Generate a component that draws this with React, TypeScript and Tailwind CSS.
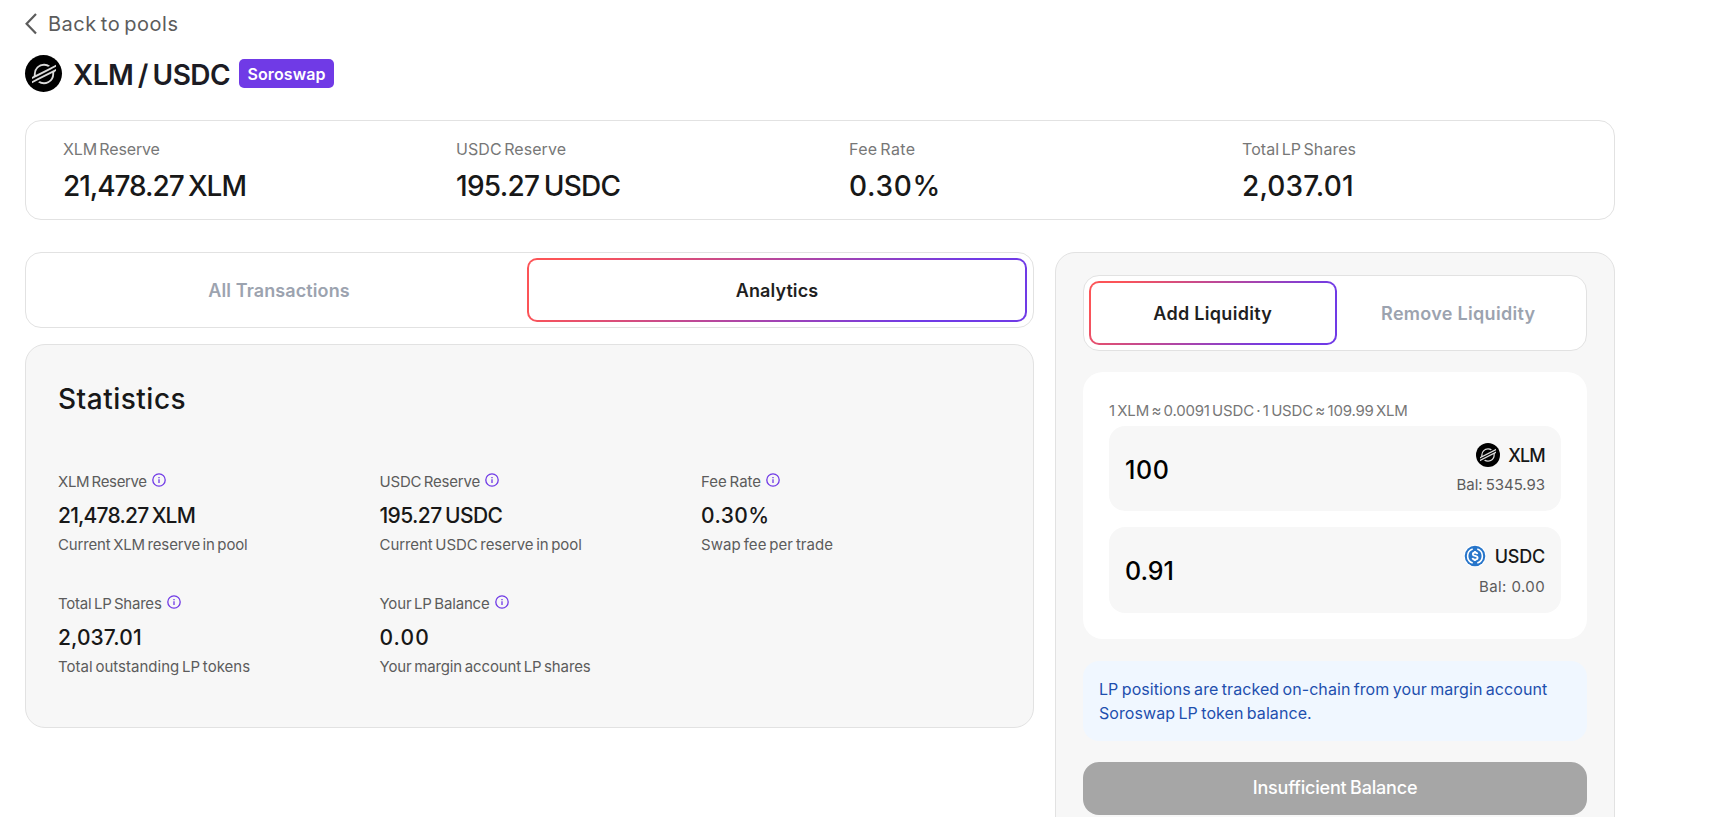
import { useState } from "react"
import { SiStellar } from "react-icons/si"
import clsx from "clsx"

const summary = [
  {
    label: "XLM Reserve",
    value: "21,478.27 XLM",
    labelClass: "tracking-[-0.15px]",
    valueClass: "tracking-[-1.05px] [word-spacing:-2px]",
  },
  {
    label: "USDC Reserve",
    value: "195.27 USDC",
    labelClass: "tracking-[0.06px]",
    valueClass: "tracking-[-0.7px] [word-spacing:-2.5px]",
  },
  { label: "Fee Rate", value: "0.30%", labelClass: "tracking-[0.35px]", valueClass: "tracking-[0.7px]" },
  { label: "Total LP Shares", value: "2,037.01", labelClass: "tracking-[0.05px]", valueClass: "tracking-[0.15px]" },
]

const statistics = [
  {
    label: "XLM Reserve",
    value: "21,478.27 XLM",
    description: "Current XLM reserve in pool",
    labelClass: "tracking-[-0.35px]",
    valueClass: "tracking-[-0.8px] [word-spacing:-1.5px]",
    descriptionClass: "tracking-[-0.15px]",
  },
  {
    label: "USDC Reserve",
    value: "195.27 USDC",
    description: "Current USDC reserve in pool",
    labelClass: "tracking-[-0.2px]",
    valueClass: "tracking-[-0.6px] [word-spacing:-1.5px]",
    descriptionClass: "tracking-[-0.06px]",
  },
  {
    label: "Fee Rate",
    value: "0.30%",
    description: "Swap fee per trade",
    labelClass: "tracking-[0.02px]",
    valueClass: "tracking-[0.4px]",
    descriptionClass: "tracking-[0.08px]",
  },
  {
    label: "Total LP Shares",
    value: "2,037.01",
    description: "Total outstanding LP tokens",
    labelClass: "tracking-[-0.23px]",
    valueClass: "tracking-[0.1px]",
    descriptionClass: "tracking-[0.02px]",
  },
  {
    label: "Your LP Balance",
    value: "0.00",
    description: "Your margin account LP shares",
    labelClass: "tracking-[-0.16px]",
    valueClass: "tracking-[1.1px]",
    descriptionClass: "tracking-[-0.12px]",
  },
]

function StellarIcon({ large = false }: { large?: boolean }) {
  return (
    <span
      className={clsx(
        "flex shrink-0 items-center justify-center rounded-full bg-black text-[#dcdcdc]",
        large ? "size-[37px]" : "size-6"
      )}
    >
      <SiStellar className={large ? "size-6" : "size-4"} />
    </span>
  )
}

function UsdcIcon() {
  return (
    <svg viewBox="0 0 24 24" className="size-6 shrink-0" fill="none">
      <circle cx="12" cy="12" r="11.2" fill="#fff" />
      <circle cx="12" cy="12" r="10.3" fill="#2775ca" />
      <path d="M9.7 4.9a7.5 7.5 0 0 0 0 14.2M14.3 4.9a7.5 7.5 0 0 1 0 14.2" stroke="#fff" strokeWidth="1.6" />
      <path
        d="M14.4 10.1c-.2-1-1-1.6-2.3-1.6-1.4 0-2.3.6-2.3 1.7 0 2.5 4.8 1 4.8 3.6 0 1.1-1 1.8-2.5 1.8s-2.4-.7-2.6-1.8M12 7v1.5M12 15.5V17"
        stroke="#fff"
        strokeWidth="1.8"
      />
    </svg>
  )
}

function InfoIcon() {
  return (
    <svg viewBox="0 0 16 16" className="size-4 shrink-0" fill="none" stroke="#703ae6">
      <circle cx="8" cy="8" r="6.2" strokeWidth="1.3" />
      <path d="M8 7.3v3.6M8 5v1.2" strokeWidth="1.3" />
    </svg>
  )
}

interface TabsProps {
  items: string[]
  active: string
  onChange: (item: string) => void
  className?: string
}

function Tabs({ items, active, onChange, className }: TabsProps) {
  return (
    <div
      className={clsx("flex h-[76px] rounded-2xl border border-[#e2e2e2] bg-white py-[5px] pr-1.5 pl-[5px]", className)}
    >
      {items.map((item) => (
        <button
          key={item}
          onClick={() => onChange(item)}
          className={clsx(
            "flex-1 cursor-pointer rounded-[10px] text-[18px] font-semibold",
            item === active
              ? "bg-[linear-gradient(135deg,#fc5457_10%,#703ae6_80%)] p-[2px] text-[#1f1f1f]"
              : "text-[#9ca3af]"
          )}
        >
          <span className="flex h-full items-center justify-center rounded-lg bg-white">{item}</span>
        </button>
      ))}
    </div>
  )
}

export default function App() {
  const [view, setView] = useState("Analytics")
  const [mode, setMode] = useState("Add Liquidity")

  return (
    <div className="h-screen overflow-hidden bg-white pl-[25px] font-['Inter',sans-serif] text-[#181818]">
      <div className="w-[1590px]">
        <button className="mt-[10px] flex h-7 cursor-pointer items-center text-[20px] leading-7 tracking-[0.5px] text-[#5c5c5c] [word-spacing:-2px]">
          <svg viewBox="0 0 12 22" className="mr-[11px] h-[22px] w-3" fill="none" stroke="currentColor" strokeWidth="2.2">
            <path d="M11 1 1.6 10.8 11 20.6" />
          </svg>
          Back to pools
        </button>

        <div className="mt-[17px] flex h-[37px] items-center">
          <StellarIcon large />
          <h1 className="ml-[11px] w-[155px] pt-[2px] text-[28px] leading-9 font-semibold tracking-[-0.5px] whitespace-nowrap text-[#1c1c24] [word-spacing:-2px]">
            XLM / USDC
          </h1>
          <span className="ml-[11px] flex h-[29px] w-[95px] items-center justify-center rounded-[5px] bg-[#703ae6] text-base font-semibold tracking-[0.1px] text-white">
            Soroswap
          </span>
        </div>

        <div className="mt-7 grid h-[100px] grid-cols-[repeat(4,393px)] rounded-2xl border border-[#e2e2e2] pt-4 pl-[37px]">
          {summary.map((item) => (
            <div key={item.label}>
              <p className={clsx("text-base leading-6 text-[#777] [word-spacing:-2px]", item.labelClass)}>
                {item.label}
              </p>
              <p className={clsx("mt-[7px] text-[28px] leading-9 font-medium", item.valueClass)}>{item.value}</p>
            </div>
          ))}
        </div>

        <div className="mt-8 flex gap-[21px]">
          <div className="w-[1009px]">
            <Tabs
              items={["All Transactions", "Analytics"]}
              active={view}
              onChange={setView}
              className="tracking-[0.1px]"
            />

            <section className="mt-4 h-[384px] rounded-[20px] border border-[#e2e2e2] bg-[#f7f7f7] pt-9 pl-8">
              <h2 className="text-[28px] leading-9 font-medium tracking-[0.5px]">Statistics</h2>
              <div className="mt-[55px] grid grid-cols-[repeat(3,321.5px)] gap-y-[39px]">
                {statistics.map((item) => (
                  <div key={item.label}>
                    <p
                      className={clsx(
                        "flex gap-1 text-[15px] leading-5 text-[#5c5c5c] [word-spacing:-1.5px]",
                        item.labelClass
                      )}
                    >
                      {item.label}
                      <InfoIcon />
                    </p>
                    <p className={clsx("mt-[10px] text-[21px] leading-7 font-medium", item.valueClass)}>
                      {item.value}
                    </p>
                    <p
                      className={clsx(
                        "mt-[5px] text-[15px] leading-5 text-[#5c5c5c] [word-spacing:-1.5px]",
                        item.descriptionClass
                      )}
                    >
                      {item.description}
                    </p>
                  </div>
                ))}
              </div>
            </section>
          </div>

          <section className="h-[640px] w-[560px] rounded-[20px] border border-[#e2e2e2] bg-[#f7f7f7] px-[27px] pt-[22px]">
            <Tabs
              items={["Add Liquidity", "Remove Liquidity"]}
              active={mode}
              onChange={setMode}
              className="tracking-[0.3px]"
            />

            <div className="mt-[21px] h-[267px] rounded-[20px] bg-white px-[26px] pt-[29px]">
              <p className="text-[15px] leading-5 tracking-[-0.2px] text-[#777] [word-spacing:-1.6px]">
                1 XLM ≈ 0.0091 USDC · 1 USDC ≈ 109.99 XLM
              </p>

              <div className="mt-[5px] flex h-[85px] justify-between rounded-2xl bg-[#f7f7f7] px-4 pt-[17px]">
                <span className="mt-[11px] text-[25px] leading-8 font-medium tracking-[0.6px] text-black">100</span>
                <div className="flex flex-col items-end">
                  <div className="flex h-6 items-center gap-2 text-[18px] font-medium">
                    <StellarIcon />
                    <span className="tracking-[-0.8px]">XLM</span>
                  </div>
                  <span className="mt-1.5 text-[15px] leading-6 tracking-[-0.05px] text-[#5c5c5c] [word-spacing:-1px]">
                    Bal: 5345.93
                  </span>
                </div>
              </div>

              <div className="mt-4 flex h-[86px] justify-between rounded-2xl bg-[#f7f7f7] px-4 pt-[17px]">
                <span className="mt-[11px] text-[25px] leading-8 font-medium text-black">0.91</span>
                <div className="flex flex-col items-end">
                  <div className="flex h-6 items-center gap-2 text-[18px] font-medium">
                    <UsdcIcon />
                    <span className="tracking-[-0.2px]">USDC</span>
                  </div>
                  <span className="mt-[7px] text-[15px] leading-6 tracking-[0.4px] text-[#5c5c5c]">Bal: 0.00</span>
                </div>
              </div>
            </div>

            <p className="mt-[22px] h-20 rounded-2xl bg-[#f0f7ff] p-4 text-base leading-6 tracking-[0.07px] text-[#1e4fae] [word-spacing:-1.2px]">
              LP positions are tracked on-chain from your margin account
              <br />
              Soroswap LP token balance.
            </p>

            <button className="mt-[21px] h-[53px] w-full rounded-2xl bg-[#a6a6a6] pb-0.5 text-[18px] font-medium tracking-[-0.2px] text-white [word-spacing:-1px]">
              Insufficient Balance
            </button>
          </section>
        </div>
      </div>
    </div>
  )
}
